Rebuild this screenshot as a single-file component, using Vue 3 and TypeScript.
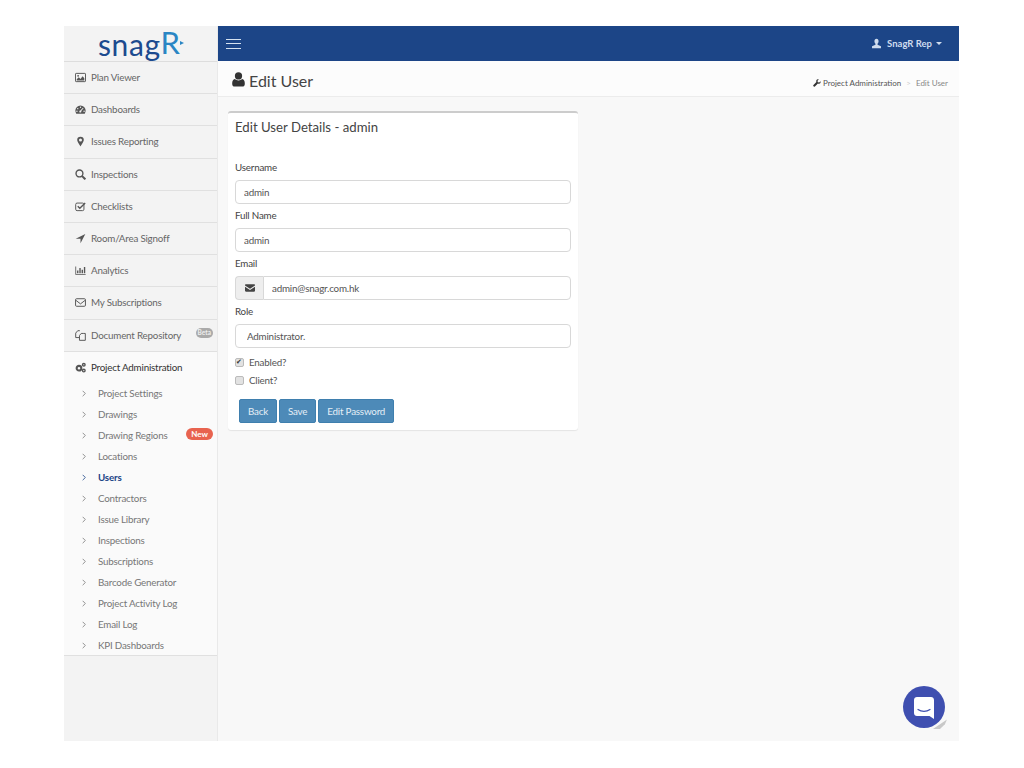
<script setup lang="ts">
const menu = [
  { label: 'Plan Viewer', icon: 'picture' },
  { label: 'Dashboards', icon: 'gauge' },
  { label: 'Issues Reporting', icon: 'pin' },
  { label: 'Inspections', icon: 'search' },
  { label: 'Checklists', icon: 'check' },
  { label: 'Room/Area Signoff', icon: 'arrow' },
  { label: 'Analytics', icon: 'chart' },
  { label: 'My Subscriptions', icon: 'mail' },
  { label: 'Document Repository', icon: 'files', beta: true },
]
const subs = [
  'Project Settings', 'Drawings', 'Drawing Regions', 'Locations', 'Users', 'Contractors',
  'Issue Library', 'Inspections', 'Subscriptions', 'Barcode Generator', 'Project Activity Log',
  'Email Log', 'KPI Dashboards',
]
</script>

<template>
  <div class="page">
    <aside class="side">
      <div class="logo"><span class="logo-a">snag</span><span class="logo-b">R</span><svg class="logo-dot" viewBox="0 0 6 6"><path d="M0 0L6 3L0 6Z" /></svg></div>
      <nav>
        <a v-for="m in menu" :key="m.label" class="row">
          <svg class="ic" viewBox="0 0 16 16">
            <g v-if="m.icon === 'picture'"><rect x=".7" y="2" width="14.600" height="12" rx="1" class="ln" /><path d="M2.500 12.500V10.500L5.500 7.500L8 10L11 6L13.500 9V12.500Z" /><circle cx="4.500" cy="5.500" r="1.300" /></g>
            <path v-else-if="m.icon === 'gauge'" fill-rule="evenodd" d="M8 2A7.500 7.500 0 0 0 .5 9.500C.5 11 1 12.500 1.800 14H14.200C15 12.500 15.500 11 15.500 9.500A7.500 7.500 0 0 0 8 2ZM8 3.800A1 1 0 1 1 8 5.800A1 1 0 1 1 8 3.800ZM4 5.800A1 1 0 1 1 4 7.800A1 1 0 1 1 4 5.800ZM12.400 6L9.100 10.200A1.500 1.500 0 1 1 7.800 9.400L11.600 5.600ZM2.800 9.500A1 1 0 1 1 2.800 11.500A1 1 0 1 1 2.800 9.500ZM13.200 9.500A1 1 0 1 1 13.200 11.500A1 1 0 1 1 13.200 9.500Z" />
            <path v-else-if="m.icon === 'pin'" fill-rule="evenodd" d="M8 1A4.800 4.800 0 0 0 3.200 5.800C3.200 8.500 8 15 8 15S12.800 8.500 12.800 5.800A4.800 4.800 0 0 0 8 1ZM8 3.600A2.200 2.200 0 1 1 8 8A2.200 2.200 0 1 1 8 3.600Z" />
            <g v-else-if="m.icon === 'search'"><circle cx="6.500" cy="6.500" r="5" class="ln2" /><path d="M10 10L15 15" class="ln3" /></g>
            <g v-else-if="m.icon === 'check'"><rect x="1" y="3" width="12" height="11" rx="2" class="ln" /><path d="M4 7.500L7 10.500L14.800 2.800" class="ln2" /></g>
            <path v-else-if="m.icon === 'arrow'" d="M15 1.500L8 15V8.500H1Z" />
            <path v-else-if="m.icon === 'chart'" d="M.5 2H1.700V13H15.500V14.300H.5ZM3 8H5V12H3ZM6.300 4.500H8.300V12H6.300ZM9.600 7H11.600V12H9.600ZM12.900 3H14.900V12H12.900Z" />
            <g v-else-if="m.icon === 'mail'"><rect x=".8" y="2.500" width="14.400" height="11" rx="1.500" class="ln" /><path d="M1.500 5L8 10L14.500 5" class="ln" /></g>
            <g v-else><path d="M7 1H4L1 4.500V11H6" class="ln" /><path d="M12 5H9L6.500 8V15H15V5Z" class="ln" /></g>
          </svg>
          <span>{{ m.label }}</span>
          <em v-if="m.beta" class="beta">Beta</em>
        </a>
        <a class="row row-open">
          <svg class="ic" viewBox="0 0 16 16"><circle cx="5.800" cy="9" r="3.400" class="ln3" /><circle cx="12.800" cy="4" r="1.900" class="ln2" /><circle cx="12.800" cy="12.500" r="1.900" class="ln2" /></svg>
          <span>Project Administration</span>
        </a>
        <ul class="subs">
          <li v-for="s in subs" :key="s" :class="{ on: s === 'Users' }">
            <svg class="angle" viewBox="0 0 6 10"><path d="M1 1L5 5L1 9" /></svg>
            <span>{{ s }}</span>
            <em v-if="s === 'Drawing Regions'" class="new">New</em>
          </li>
        </ul>
      </nav>
    </aside>

    <div class="main">
      <header class="top">
        <button class="burger" aria-label="Menu"><i></i><i></i><i></i></button>
        <div class="who">
          <svg class="who-ic" viewBox="0 0 16 16"><path d="M8 1C6 1 5 2.500 5 4.800C5 6.500 5.700 7.800 6.500 8.500V9.800L1.500 12V15H14.500V12L9.500 9.800V8.500C10.300 7.800 11 6.500 11 4.800C11 2.500 10 1 8 1Z" /></svg>
          <span>SnagR Rep</span><b class="caret"></b>
        </div>
      </header>

      <div class="title">
        <h1>
          <svg class="h-ic" viewBox="0 0 14 16"><circle cx="7" cy="4.200" r="3.900" /><path d="M3 7.500C4 8.500 5.400 9 7 9S10 8.500 11 7.500C12.800 7.800 13.800 9.500 13.800 12.500C13.800 14.500 12.700 15.600 11 15.600H3C1.300 15.600 .2 14.500 .2 12.500C.2 9.500 1.200 7.800 3 7.500Z" /></svg>
          Edit User
        </h1>
        <div class="crumbs">
          <svg class="wr" viewBox="0 0 16 16"><path d="M15 4.500L12.500 7L9.500 6.500L9 3.500L11.500 1C9.500 .2 7.500 1 6.800 2.500C6.200 3.800 6.400 5 6.800 6L1 12C0 13 .5 14 1 14.600S2.800 15.800 3.800 14.900L9.800 9C11 9.500 12.200 9.500 13.400 9C15 8.300 15.800 6.500 15 4.500Z" /></svg>
          <span class="c1">Project Administration</span><span class="sep">&gt;</span><span class="c2">Edit User</span>
        </div>
      </div>

      <section class="content">
        <form class="card" @submit.prevent>
          <h2>Edit User Details - admin</h2>
          <label class="lab" for="u">Username</label>
          <input id="u" class="inp" value="admin" />
          <label class="lab" for="f">Full Name</label>
          <input id="f" class="inp" value="admin" />
          <label class="lab" for="e">Email</label>
          <div class="group">
            <span class="addon"><svg viewBox="0 0 16 12"><path d="M0 1.500C0 .7 .7 0 1.500 0H14.500C15.300 0 16 .7 16 1.500V2L8 7L0 2ZM0 4L8 9L16 4V10.500C16 11.300 15.300 12 14.500 12H1.500C.7 12 0 11.300 0 10.500Z" /></svg></span>
            <input id="e" class="inp inp-g" value="admin@snagr.com.hk" />
          </div>
          <label class="lab" for="r">Role</label>
          <input id="r" class="inp inp-r" value="Administrator." />
          <label class="chk"><input type="checkbox" checked /><span>Enabled?</span></label>
          <label class="chk"><input type="checkbox" /><span>Client?</span></label>
          <div class="btns">
            <button type="button">Back</button>
            <button type="button">Save</button>
            <button type="button">Edit Password</button>
          </div>
        </form>
      </section>
    </div>

    <div class="chat">
      <span class="chat-shadow"></span>
      <span class="chat-circle">
        <svg viewBox="0 0 20 22"><path d="M3 0H17C18.700 0 20 1.300 20 3V22L15.500 19H3C1.300 19 0 17.700 0 16V3C0 1.300 1.300 0 3 0Z" fill="#fff" /><path d="M4 12.500C7.500 15 12.500 15 16 12.500" fill="none" stroke="#3f4fb0" stroke-width="1.200" stroke-linecap="round" /></svg>
      </span>
    </div>
  </div>
</template>

<style>
html, body { margin: 0; background: #fff; }
</style>

<style scoped>
.page {
  position: relative;
  display: flex;
  width: 895px;
  height: 715px;
  margin: 26px 0 0 64px;
  font-family: "Lato", "Open Sans", sans-serif;
  font-size: 9.800px;
  letter-spacing: -.2px;
  color: #555;
  background: #f8f8f8;
}
.side { width: 154px; flex: none; background: #f3f3f3; border-right: 1px solid #e9e9e9; box-sizing: border-box; }
.logo { height: 36px; display: flex; justify-content: center; align-items: center; padding-left: 1px; box-sizing: border-box; border-bottom: 1px solid #ddd; font-size: 30px; line-height: 30px; letter-spacing: 0; position: relative; }
.logo-a { color: #1c4b8f; letter-spacing: .6px; }
.logo-b { color: #2a86c4; margin-top: -3px; font-size: 31px; }
.logo-dot { width: 4px; height: 4px; fill: #2a86c4; margin-top: -2px; }
nav { display: block; }
.row { display: flex; align-items: center; height: 31.200px; box-sizing: content-box; border-bottom: 1px solid #e0e0e0; padding-left: 11px; color: #666; position: relative; }
.row span { margin-top: -1px; }
.ic { width: 11px; height: 11px; flex: none; margin-right: 5px; fill: #555; }
.ln { fill: none; stroke: #555; stroke-width: 1.400; }
.ln2 { fill: none; stroke: #555; stroke-width: 2; }
.ln3 { fill: none; stroke: #555; stroke-width: 3; }
.row-open { background: #fafafa; color: #333; border-bottom: 0; }
.beta { position: absolute; right: 4px; top: 8px; font-style: normal; background: #aaa; color: #eee; font-size: 6.500px; line-height: 10px; letter-spacing: 0; border-radius: 5px; padding: 0 2px; font-weight: 700; }
.subs { list-style: none; margin: 0; padding: 0; height: 272px; background: #fafafa; border-bottom: 1px solid #e0e0e0; }
.subs li { height: 21px; display: flex; align-items: center; padding-left: 18px; color: #777; position: relative; }
.subs li span { margin-top: -1px; }
.subs li.on { color: #1c4587; font-weight: 700; }
.angle { width: 4px; height: 7px; fill: none; stroke: currentColor; stroke-width: 1.200; margin-right: 12px; flex: none; }
.new { position: absolute; right: 4px; top: 3px; background: #e8634f; color: #fff; font-style: normal; font-size: 8px; font-weight: 700; line-height: 12px; letter-spacing: 0; padding: 0 5px; border-radius: 6px; }
.main { flex: 1; display: flex; flex-direction: column; min-width: 0; }
.top { height: 35px; flex: none; background: #1c4587; display: flex; align-items: center; justify-content: space-between; padding: 0 17px 0 8px; }
.burger { width: 15px; height: 10px; padding: 0; border: 0; background: none; display: flex; flex-direction: column; justify-content: space-between; }
.burger i { display: block; height: 1px; background: #d6e2f0; }
.who { display: flex; align-items: center; color: #cfdcee; font-weight: 700; font-size: 9.500px; letter-spacing: 0; }
.who-ic { width: 11px; height: 11px; fill: #cfdcee; margin-right: 5px; }
.caret { margin-left: 4px; border: 3px solid transparent; border-top-color: #cfdcee; border-bottom: 0; }
.title { height: 36px; flex: none; box-sizing: border-box; background: #fcfcfc; border-bottom: 1px solid #ececec; display: flex; align-items: center; justify-content: space-between; padding: 0 11px 0 14px; }
h1 { margin: 3px 0 0; display: flex; align-items: center; font-size: 16px; font-weight: 400; letter-spacing: 0; color: #444; }
.h-ic { width: 13px; height: 15px; fill: #333; margin-right: 4px; margin-top: -2px; }
.crumbs { display: flex; align-items: center; font-size: 8px; letter-spacing: 0; color: #555; margin-top: 8px; }
.wr { width: 8px; height: 8px; fill: #333; margin-right: 2px; }
.sep { color: #ccc; margin: 0 5px; }
.c2 { color: #888; }
.content { flex: 1; padding: 14px 10px; }
.card { width: 350px; height: 319px; box-sizing: border-box; background: #fff; border-top: 2px solid #ccc; border-radius: 3px; box-shadow: 0 1px 1px rgba(0,0,0,.08); padding: 5px 7px; }
h2 { margin: 0 0 24px; font-size: 13.200px; line-height: 18px; font-weight: 400; letter-spacing: 0; color: #444; }
.lab { display: block; height: 20px; line-height: 14px; color: #444; }
.inp { display: block; width: 100%; height: 24px; box-sizing: border-box; border: 1px solid #d8d8d8; border-radius: 4px; padding: 0 8px; font: inherit; letter-spacing: inherit; color: #555; margin-bottom: 4px; background: #fff; outline: 0; }
.inp-r { padding-left: 11px; margin-bottom: 5px; }
.group { display: flex; height: 24px; margin-bottom: 4px; }
.addon { width: 28px; flex: none; box-sizing: border-box; background: #eee; border: 1px solid #d8d8d8; border-right: 0; border-radius: 4px 0 0 4px; display: flex; align-items: center; justify-content: center; }
.addon svg { width: 10px; height: 8px; fill: #444; }
.inp-g { border-radius: 0 4px 4px 0; margin: 0; }
.chk { display: flex; align-items: center; height: 18px; color: #555; }
.chk input { appearance: none; width: 9px; height: 9px; box-sizing: border-box; margin: 0 5px 0 0; background: #e2e2e2; border: 1px solid #bbb; border-radius: 2px; position: relative; }
.chk input:checked::after { content: "\2714"; position: absolute; left: 0; top: -2px; font: 7px/10px "DejaVu Sans", sans-serif; color: #333; }
.btns { display: flex; gap: 2px; padding: 10px 0 0 4px; }
.btns button { height: 24px; box-sizing: border-box; border: 1px solid #3f7fae; border-radius: 2px; background: #4d8ab8; color: #e4eef6; font: inherit; letter-spacing: inherit; padding: 0 8px 1px; }
.chat { position: absolute; left: 839px; top: 660px; width: 42px; height: 42px; }
.chat-circle { position: absolute; inset: 0; border-radius: 50%; background: #3f4fb0; display: flex; align-items: center; justify-content: center; }
.chat-circle svg { width: 20px; height: 22px; margin-top: 2px; }
.chat-shadow { position: absolute; right: -2px; bottom: -1px; width: 14px; height: 12px; background: #c8c8c8; clip-path: polygon(0 100%, 100% 20%, 85% 60%, 50% 100%); }
</style>
